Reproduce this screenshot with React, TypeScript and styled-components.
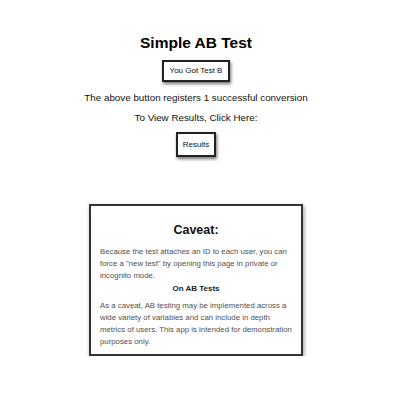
import styled, { createGlobalStyle } from "styled-components";

const GlobalStyle = createGlobalStyle`
  body {
    margin: 0;
    background: #ffffff;
    font-family: "Liberation Sans", Arial, sans-serif;
    color: #111111;
  }
`;

const App = () => {
  return (
    <>
      <GlobalStyle />
      <Page>
        <Title>Simple AB Test</Title>
        <Button>You Got Test B</Button>
        <Line>The above button registers 1 successful conversion</Line>
        <Line>To View Results, Click Here:</Line>
        <Button small>Results</Button>
        <Card>
          <CardTitle>Caveat:</CardTitle>
          <Paragraph>
            Because the test attaches an ID to each user, you can force a "new
            test" by opening this page in private or incognito mode.
          </Paragraph>
          <SubTitle>On AB Tests</SubTitle>
          <Paragraph>
            As a caveat, AB testing may be implemented across a wide variety of
            variables and can include in depth metrics of users. This app is
            intended for demonstration purposes only.
          </Paragraph>
        </Card>
      </Page>
    </>
  );
};

const Page = styled.div`
  width: 392px;
  display: flex;
  flex-direction: column;
  align-items: center;
  padding-top: 34px;
`;

const Title = styled.h1`
  margin: 0 0 8px;
  font-size: 15.5px;
  line-height: 18px;
  font-weight: bold;
  color: #000;
`;

const Button = styled.button<{ small?: boolean }>`
  font-family: "Liberation Sans", Arial, sans-serif;
  font-size: 8px;
  line-height: 10px;
  color: #111;
  background: #fff;
  border: 2px solid #222;
  padding: ${(p) => (p.small ? "5.5px 4.5px" : "4px 6px")};
  box-shadow: 1px 2px 3px rgba(0, 0, 0, 0.55);
`;

const Line = styled.p`
  margin: 10px 0 -2px;
  font-size: 9.8px;
  line-height: 12px;
  color: #111;

  & + & {
    margin-top: 10px;
    margin-bottom: 8px;
  }
`;

const Card = styled.div`
  margin-top: 47px;
  width: 210px;
  border: 2px solid #333;
  box-shadow: 1px 2px 4px rgba(0, 0, 0, 0.4);
  padding: 17px 0 6px;
  display: flex;
  flex-direction: column;
  align-items: center;
`;

const CardTitle = styled.h2`
  margin: 0 0 9px;
  font-size: 12.5px;
  line-height: 14px;
  font-weight: bold;
  color: #111;
`;

const Paragraph = styled.p`
  margin: 0 7px 0 9px;
  font-size: 7.8px;
  line-height: 12px;
  color: #505050;
  align-self: stretch;
`;

const SubTitle = styled.h3`
  margin: 1px 0 5px;
  font-size: 8px;
  line-height: 12px;
  font-weight: bold;
  color: #222;
`;

export default App;
